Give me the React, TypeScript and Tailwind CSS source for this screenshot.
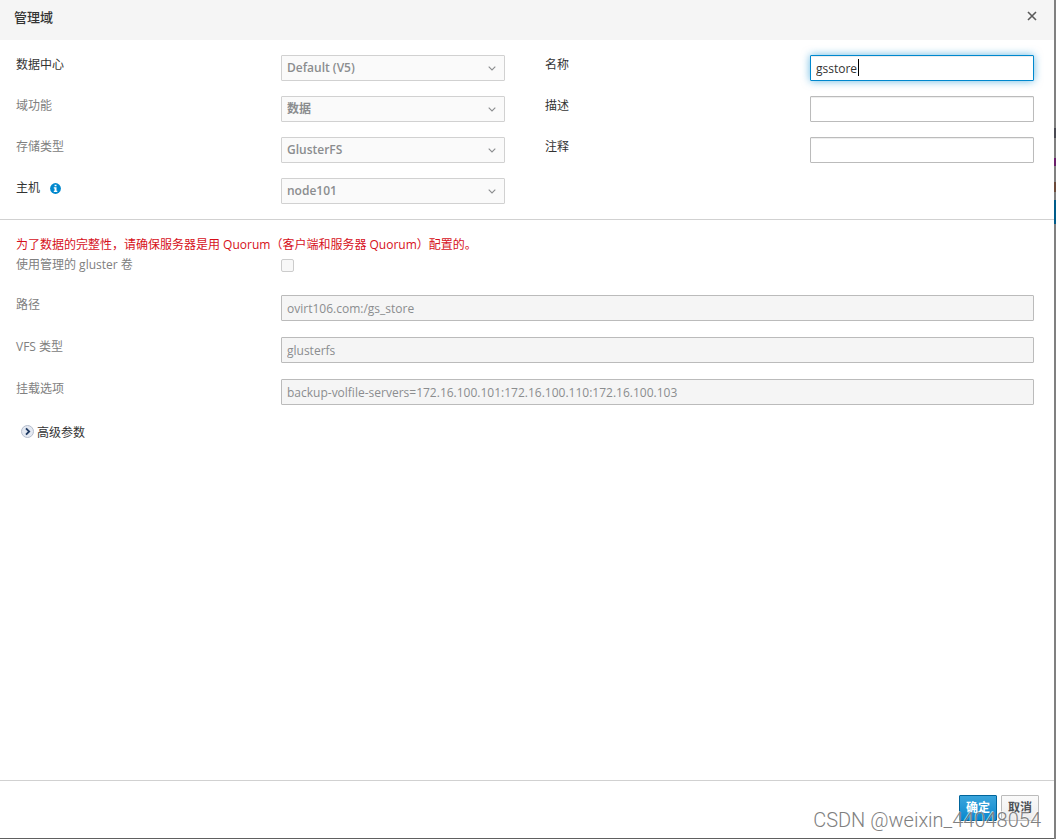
import clsx from 'clsx'
import React, { useEffect, useRef } from 'react'

interface SelectFieldProps {
  id: string
  label: string
  value: string
  muted?: boolean
  info?: boolean
}

interface TextFieldProps {
  id: string
  label: string
  value?: string
  disabled?: boolean
  focused?: boolean
}

const ROW = 'grid grid-cols-[265px_minmax(0,1fr)] items-start'

const Label: React.FC<{ htmlFor: string; muted?: boolean; children: React.ReactNode }> = ({
  htmlFor,
  muted,
  children
}) => (
  <label htmlFor={htmlFor} className={clsx('leading-5', muted ? 'text-[#808080]' : 'text-[#333333]')}>
    {children}
  </label>
)

const InfoIcon: React.FC = () => (
  <svg viewBox="0 0 11 11" className="size-[11px]">
    <circle cx="5.5" cy="5.5" r="5.4" fill="#0088ce" />
    <path d="M4.6 1.7 H6.5 V3.3 H4.6 Z M3.8 4.3 H6.5 V7.7 H7.3 V9 H3.8 V7.7 H4.6 V5.6 H3.8 Z" fill="#ffffff" />
  </svg>
)

const SelectField: React.FC<SelectFieldProps> = ({ id, label, value, muted, info }) => (
  <div className={ROW}>
    <div className="flex items-center gap-2.5">
      <Label htmlFor={id} muted={muted}>
        {label}
      </Label>
      {info && <InfoIcon />}
    </div>
    <div className="relative">
      <select
        id={id}
        disabled
        className="block h-[26px] w-full appearance-none rounded-[1px] border border-[#d1d1d1] bg-[#fafafa] px-[5px] font-semibold text-[#8b8d8f] disabled:opacity-100"
      >
        <option>{value}</option>
      </select>
      <svg
        viewBox="0 0 8 5"
        className="pointer-events-none absolute top-[11px] right-[9px] h-[5px] w-2 fill-none stroke-[#8b8d8f]"
      >
        <path d="M0.7 0.6 L4 3.9 L7.3 0.6" strokeWidth="1.1" />
      </svg>
    </div>
  </div>
)

const TextField: React.FC<TextFieldProps> = ({ id, label, value, disabled, focused }) => {
  const ref = useRef<HTMLInputElement>(null)

  useEffect(() => {
    if (!focused || !ref.current) return
    ref.current.focus()
    ref.current.setSelectionRange(ref.current.value.length, ref.current.value.length)
  }, [focused])

  return (
    <div className={ROW}>
      <Label htmlFor={id} muted={disabled}>
        {label}
      </Label>
      <div className="relative">
        <input
          id={id}
          ref={ref}
          type="text"
          defaultValue={value}
          disabled={disabled}
          className={clsx(
            'block h-[26px] w-full rounded-[1px] border border-[#bbbbbb] px-[5px] caret-transparent outline-none',
            'focus:border-[#0088ce] focus:shadow-[inset_0_1px_1px_rgba(3,3,3,0.075),0_0_8px_rgba(0,136,206,0.6)]',
            disabled ? 'bg-[#f5f5f5] text-[#8b8d8f]' : 'bg-white text-[#333333] shadow-[inset_0_1px_1px_rgba(3,3,3,0.075)]'
          )}
        />
        {focused && <span className="pointer-events-none absolute top-1 left-12 h-[17px] w-px bg-black" />}
      </div>
    </div>
  )
}

// Sliver of the dimmed page that stays visible beside the dialog
const Backdrop: React.FC = () => (
  <div className="flex w-0.5 shrink-0 flex-col bg-[#808080]">
    <div className="mt-32 h-2.5 bg-[#4a4a52]" />
    <div className="mt-5 h-2 bg-[#6b1f6b]" />
    <div className="mt-4 h-2.5 bg-[#6b4a3a]" />
    <div className="mt-2 h-6 bg-[#005c8a]" />
  </div>
)

export default function App() {
  return (
    <div className="flex min-h-screen bg-[#606060] font-['Open_Sans','Noto_Sans_CJK_SC',sans-serif] text-[12px] text-[#333333]">
      <div role="dialog" aria-labelledby="title" className="relative mb-px flex min-w-0 flex-1 flex-col bg-white">
        <header className="flex h-10 items-center justify-between bg-[#f5f5f5] pr-[17px] pb-1.5 pl-3.5">
          <h1 id="title" className="text-[13px] leading-5 font-medium">
            管理域
          </h1>
          <button type="button" aria-label="关闭" className="pb-0.5">
            <svg viewBox="0 0 10 10" className="size-2.5 stroke-[#5a5a5a]">
              <path d="M1 1 L9 9 M9 1 L1 9" strokeWidth="1.6" />
            </svg>
          </button>
        </header>

        <form className="flex flex-1 flex-col">
          <section className="grid grid-cols-2 gap-x-10 border-b border-[#d1d1d1] py-[15px] pr-5 pl-4">
            <div className="flex flex-col gap-[15px]">
              <SelectField id="dc" label="数据中心" value="Default (V5)" />
              <SelectField id="function" label="域功能" value="数据" muted />
              <SelectField id="storage" label="存储类型" value="GlusterFS" muted />
              <SelectField id="host" label="主机" value="node101" info />
            </div>
            <div className="flex flex-col gap-[15px]">
              <TextField id="name" label="名称" value="gsstore" focused />
              <TextField id="description" label="描述" />
              <TextField id="comment" label="注释" />
            </div>
          </section>

          <section className="flex flex-1 flex-col pt-[15px] pr-5 pl-4">
            <p className="leading-5 text-[#d6101a]">
              为了数据的完整性，请确保服务器是用 Quorum（客户端和服务器 Quorum）配置的。
            </p>
            <div className={ROW}>
              <Label htmlFor="managed" muted>
                使用管理的 gluster 卷
              </Label>
              <input
                id="managed"
                type="checkbox"
                disabled
                className="mt-1 size-[13px] appearance-none rounded-xs border border-[#cccccc] bg-[#f8f8f8]"
              />
            </div>
            <div className="mt-5 flex flex-col gap-4">
              <TextField id="path" label="路径" value="ovirt106.com:/gs_store" disabled />
              <TextField id="vfs" label="VFS 类型" value="glusterfs" disabled />
              <TextField
                id="mount"
                label="挂载选项"
                value="backup-volfile-servers=172.16.100.101:172.16.100.110:172.16.100.103"
                disabled
              />
            </div>
            <button type="button" className="mt-[18px] ml-[5px] flex items-start gap-[3px] self-start leading-5">
              <svg viewBox="0 0 13 13" className="mt-0.5 size-[13px]">
                <circle cx="6.5" cy="6.5" r="6" fill="#e4e9f2" stroke="#b4bccb" />
                <path d="M5 3.3 L8.2 6.5 L5 9.7" fill="none" stroke="#1f3a63" strokeWidth="1.8" />
              </svg>
              高级参数
            </button>
          </section>

          <footer className="flex h-[58px] items-start justify-end gap-1 border-t border-[#d1d1d1] pt-3.5 pr-[15px]">
            <button
              type="submit"
              className="h-[26px] rounded-[1px] border border-[#00659c] bg-linear-to-b from-[#39a5dc] to-[#0088ce] px-1.5 font-semibold text-white"
            >
              确定
            </button>
            <button
              type="button"
              className="h-[26px] rounded-[1px] border border-[#bbbbbb] bg-linear-to-b from-[#fafafa] to-[#ededed] px-1.5 font-semibold text-[#4d5258]"
            >
              取消
            </button>
          </footer>
        </form>

        <div className="pointer-events-none absolute right-[13px] bottom-1.5 font-['Roboto',sans-serif] text-[20px] leading-6 font-light text-[#808080] [text-shadow:-1px_-1px_0_rgba(255,255,255,0.6)]">
          CSDN @weixin_44048054
        </div>
      </div>
      <Backdrop />
    </div>
  )
}
